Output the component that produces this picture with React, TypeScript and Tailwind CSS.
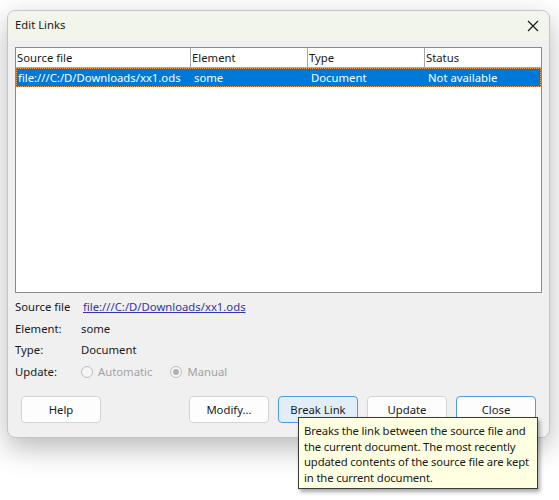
import React from "react";

const font = { fontFamily: '"Segoe UI", "Noto Sans", "Liberation Sans", sans-serif' };

function Radio({ label, checked }: { label: string; checked?: boolean }) {
  return (
    <div className="flex items-center gap-[5px] text-[#a3a3a3]">
      <span className="flex h-[12px] w-[12px] items-center justify-center rounded-full border border-[#bdbdbd] bg-[#f6f6f6]">
        {checked && <span className="h-[6px] w-[6px] rounded-full bg-[#b0b0b0]" />}
      </span>
      <span>{label}</span>
    </div>
  );
}

function Btn({ label, variant }: { label: string; variant?: "hover" | "default" }) {
  const cls =
    variant === "hover"
      ? "border-[#4a9ee0] bg-[#e1eefa]"
      : variant === "default"
      ? "border-[#4a9ee0] bg-[#fdfdfd]"
      : "border-[#d3d3d3] bg-[#fdfdfd]";
  return (
    <button
      className={`flex h-[27px] w-[80px] items-center justify-center rounded-[4px] border pt-[2px] text-[11.3px] text-[#1a1a1a] ${cls}`}
    >
      {label}
    </button>
  );
}

export default function App() {
  const cols = [
    { w: "w-[175px]", title: "Source file", value: "file:///C:/D/Downloads/xx1.ods" },
    { w: "w-[117px]", title: "Element", value: "some" },
    { w: "w-[117px]", title: "Type", value: "Document" },
    { w: "flex-1", title: "Status", value: "Not available" },
  ];
  return (
    <div className="relative h-[500px] w-[559px] overflow-hidden bg-white" style={font}>
      <div className="ml-[7px] mt-[10px] flex h-[428px] w-[543px] flex-col overflow-hidden rounded-[8px] border border-[#c4c4c4] bg-[#f0f0f0] text-[11.3px] text-[#1a1a1a] shadow-[0_10px_28px_rgba(0,0,0,0.28)]">
        {/* title bar */}
        <div className="flex h-[29px] shrink-0 items-center justify-between bg-[#f1f5ec] pl-[7px] pr-[10px]">
          <span>Edit Links</span>
          <svg width="12" height="12" viewBox="0 0 12 12" className="text-[#1a1a1a]">
            <path d="M1 1 L11 11 M11 1 L1 11" stroke="currentColor" strokeWidth="1.2" fill="none" />
          </svg>
        </div>

        <div className="flex flex-1 flex-col px-[7px] pt-[7px]">
          {/* link list */}
          <div className="flex h-[246px] flex-col border border-[#868a90] bg-white">
            <div className="flex h-[20px] border-b border-[#a8a8a8]">
              {cols.map((c, i) => (
                <div
                  key={c.title}
                  className={`${c.w} flex items-center pl-[1px] pt-[1px] ${i < 3 ? "border-r border-[#a8a8a8]" : ""}`}
                >
                  {c.title}
                </div>
              ))}
            </div>
            <div className="flex h-[19px] border border-dotted border-[#f0a050] bg-[#0078d7] text-white">
              {cols.map((c, i) => (
                <div key={c.title} className={`${c.w} flex items-center pt-[1px] ${i === 0 ? "pl-[1px]" : "pl-[2px]"}`}>
                  {c.value}
                </div>
              ))}
            </div>
          </div>

          {/* details */}
          <div className="mt-[4px] flex flex-col gap-[0.5px]">
            <div className="flex h-[21px] items-center">
              <span className="w-[68px]">Source file</span>
              <span className="text-[#3434a8] underline">file:///C:/D/Downloads/xx1.ods</span>
            </div>
            <div className="flex h-[21px] items-center">
              <span className="w-[66px]">Element:</span>
              <span>some</span>
            </div>
            <div className="flex h-[21px] items-center">
              <span className="w-[66px]">Type:</span>
              <span>Document</span>
            </div>
            <div className="flex h-[21px] items-center">
              <span className="w-[66px]">Update:</span>
              <div className="flex gap-[18px]">
                <Radio label="Automatic" />
                <Radio label="Manual" checked />
              </div>
            </div>
          </div>

          {/* buttons */}
          <div className="mt-[13px] flex px-[6px]">
            <Btn label="Help" />
            <div className="ml-auto flex gap-[9px]">
              <Btn label="Modify..." />
              <Btn label="Break Link" variant="hover" />
              <Btn label="Update" />
              <Btn label="Close" variant="default" />
            </div>
          </div>
        </div>
      </div>

      {/* tooltip */}
      <div className="absolute left-[298px] top-[417px] w-[240px] border border-[#3a3a3a] bg-[#ffffe1] pb-[3px] pl-[5px] pr-[1px] pt-[5px] text-[11.3px] leading-[15.5px] tracking-[-0.15px] text-[#1a1a1a] shadow-[2px_3px_4px_rgba(0,0,0,0.35)]">
        Breaks the link between the source file and the current document. The most recently updated contents of the source file are kept in the current document.
      </div>
    </div>
  );
}
